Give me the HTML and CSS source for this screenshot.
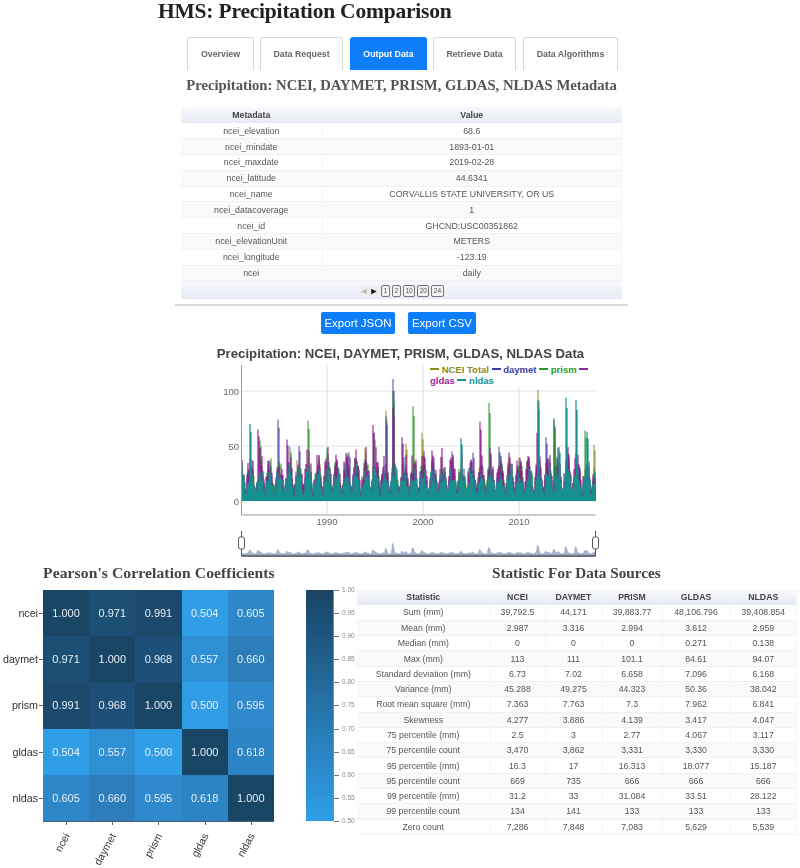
FILE: index.html
```html
<!DOCTYPE html>
<html lang="en">

<head>
    <meta charset="UTF-8">
    <meta name="viewport" content="width=device-width, initial-scale=1.0">
    <title>HMS: Precipitation Comparison</title>
    <link rel="stylesheet" href="styles.css">
</head>

<body>
    <h1 class="page-title">HMS: Precipitation Comparison</h1>

    <div class="main">
        <ul class="tabs">
            <li class="tab tab-1">Overview</li>
            <li class="tab tab-2">Data Request</li>
            <li class="tab tab-3 active">Output Data</li>
            <li class="tab tab-4">Retrieve Data</li>
            <li class="tab tab-5">Data Algorithms</li>
        </ul>

        <h2 class="meta-title">Precipitation: NCEI, DAYMET, PRISM, GLDAS, NLDAS Metadata</h2>

        <table class="grid meta-table">
            <thead>
                <tr><th class="meta-key">Metadata</th><th>Value</th></tr>
            </thead>
            <tbody>
                <tr><td>ncei_elevation</td><td>68.6</td></tr>
                <tr><td>ncei_mindate</td><td>1893-01-01</td></tr>
                <tr><td>ncei_maxdate</td><td>2019-02-28</td></tr>
                <tr><td>ncei_latitude</td><td>44.6341</td></tr>
                <tr><td>ncei_name</td><td>CORVALLIS STATE UNIVERSITY, OR US</td></tr>
                <tr><td>ncei_datacoverage</td><td>1</td></tr>
                <tr><td>ncei_id</td><td>GHCND:USC00351862</td></tr>
                <tr><td>ncei_elevationUnit</td><td>METERS</td></tr>
                <tr><td>ncei_longitude</td><td>-123.19</td></tr>
                <tr><td>ncei</td><td>daily</td></tr>
            </tbody>
            <tfoot>
                <tr>
                    <td colspan="2">
                        <div class="pager">
                            <span class="pg-arrow off">&#9668;</span>
                            <span class="pg-arrow">&#9658;</span>
                            <span class="pg-num">1</span>
                            <span class="pg-num">2</span>
                            <span class="pg-num">10</span>
                            <span class="pg-num">20</span>
                            <span class="pg-num">24</span>
                        </div>
                    </td>
                </tr>
            </tfoot>
        </table>

        <hr class="rule">

        <div class="exports">
            <button class="btn">Export JSON</button>
            <button class="btn">Export CSV</button>
        </div>

        <h3 class="chart-title">Precipitation: NCEI, DAYMET, PRISM, GLDAS, NLDAS Data</h3>
    </div>

    <div class="chart" id="chart">
        <div class="legend">
            <span class="c-ncei"><i></i> NCEI Total</span>
            <span class="c-daymet"><i></i> daymet</span>
            <span class="c-prism"><i></i> prism</span>
            <span class="c-gldas"><i></i> gldas</span>
            <span class="c-nldas"><i></i> nldas</span>
        </div>
    </div>

    <div class="bottom">
        <div class="heat-panel">
            <h2 class="sub-title heat-title">Pearson's Correlation Coefficients</h2>
            <div class="heat">
                <div class="y-label">ncei</div>
                <div class="cell v100">1.000</div><div class="cell v97">0.971</div><div class="cell v99">0.991</div><div class="cell v50">0.504</div><div class="cell v60">0.605</div>
                <div class="y-label">daymet</div>
                <div class="cell v97">0.971</div><div class="cell v100">1.000</div><div class="cell v96">0.968</div><div class="cell v55">0.557</div><div class="cell v66">0.660</div>
                <div class="y-label">prism</div>
                <div class="cell v99">0.991</div><div class="cell v96">0.968</div><div class="cell v100">1.000</div><div class="cell v50">0.500</div><div class="cell v59">0.595</div>
                <div class="y-label">gldas</div>
                <div class="cell v50">0.504</div><div class="cell v55">0.557</div><div class="cell v50">0.500</div><div class="cell v100">1.000</div><div class="cell v62">0.618</div>
                <div class="y-label">nldas</div>
                <div class="cell v60">0.605</div><div class="cell v66">0.660</div><div class="cell v59">0.595</div><div class="cell v62">0.618</div><div class="cell v100">1.000</div>
                <div class="x-spacer"></div>
                <div class="x-label"><span>ncei</span></div>
                <div class="x-label"><span>daymet</span></div>
                <div class="x-label"><span>prism</span></div>
                <div class="x-label"><span>gldas</span></div>
                <div class="x-label"><span>nldas</span></div>
            </div>
        </div>

        <div class="scale">
            <div class="scale-bar"></div>
            <div class="scale-ticks">
                <span>1.00</span><span>0.95</span><span>0.90</span><span>0.85</span><span>0.80</span><span>0.75</span>
                <span>0.70</span><span>0.65</span><span>0.60</span><span>0.55</span><span>0.50</span>
            </div>
        </div>

        <div class="stat-panel">
            <h2 class="sub-title stat-title">Statistic For Data Sources</h2>
            <table class="grid stat-table">
                <thead>
                    <tr><th class="s0">Statistic</th><th class="s1">NCEI</th><th class="s2">DAYMET</th><th class="s3">PRISM</th><th class="s4">GLDAS</th><th>NLDAS</th></tr>
                </thead>
                <tbody>
                    <tr><td>Sum (mm)</td><td>39,792.5</td><td>44,171</td><td>39,883.77</td><td>48,106.796</td><td>39,408.854</td></tr>
                    <tr><td>Mean (mm)</td><td>2.987</td><td>3.316</td><td>2.994</td><td>3.612</td><td>2.959</td></tr>
                    <tr><td>Median (mm)</td><td>0</td><td>0</td><td>0</td><td>0.271</td><td>0.138</td></tr>
                    <tr><td>Max (mm)</td><td>113</td><td>111</td><td>101.1</td><td>84.61</td><td>94.07</td></tr>
                    <tr><td>Standard deviation (mm)</td><td>6.73</td><td>7.02</td><td>6.658</td><td>7.096</td><td>6.168</td></tr>
                    <tr><td>Variance (mm)</td><td>45.288</td><td>49.275</td><td>44.323</td><td>50.36</td><td>38.042</td></tr>
                    <tr><td>Root mean square (mm)</td><td>7.363</td><td>7.763</td><td>7.3</td><td>7.962</td><td>6.841</td></tr>
                    <tr><td>Skewness</td><td>4.277</td><td>3.886</td><td>4.139</td><td>3.417</td><td>4.047</td></tr>
                    <tr><td>75 percentile (mm)</td><td>2.5</td><td>3</td><td>2.77</td><td>4.067</td><td>3.117</td></tr>
                    <tr><td>75 percentile count</td><td>3,470</td><td>3,862</td><td>3,331</td><td>3,330</td><td>3,330</td></tr>
                    <tr><td>95 percentile (mm)</td><td>16.3</td><td>17</td><td>16.313</td><td>18.077</td><td>15.187</td></tr>
                    <tr><td>95 percentile count</td><td>669</td><td>735</td><td>666</td><td>666</td><td>666</td></tr>
                    <tr><td>99 percentile (mm)</td><td>31.2</td><td>33</td><td>31.084</td><td>33.51</td><td>28.122</td></tr>
                    <tr><td>99 percentile count</td><td>134</td><td>141</td><td>133</td><td>133</td><td>133</td></tr>
                    <tr><td>Zero count</td><td>7,286</td><td>7,848</td><td>7,083</td><td>5,629</td><td>5,539</td></tr>
                </tbody>
            </table>
        </div>
    </div>

    <script src="chart.js"></script>
</body>

</html>
```

FILE: styles.css
```css
* {
    box-sizing: border-box;
}

body {
    margin: 0;
    background-color: #fff;
    font-family: "Liberation Sans", Arial, sans-serif;
    color: #444;
    filter: blur(0.35px);
}

.page-title {
    margin: 0;
    padding-left: 158px;
    height: 37px;
    font-family: "Liberation Serif", serif;
    font-size: 21.5px;
    letter-spacing: -0.2px;
    line-height: 23px;
    font-weight: bold;
    color: #222;
}

.main {
    width: 453px;
    margin-left: 175px;
}

.tabs {
    display: flex;
    margin: 0;
    padding: 0;
    list-style: none;
    height: 33px;
}

.tab {
    height: 33px;
    line-height: 32px;
    text-align: center;
    font-size: 8.8px;
    font-weight: bold;
    color: #666;
    background-color: #fff;
    border: 1px solid #d8d8d8;
    border-bottom: 0;
    border-radius: 3px 3px 0 0;
}

.tab-1 { width: 67px; margin-left: 12px; }
.tab-2 { width: 83px; margin-left: 6px; }
.tab-3 { width: 77px; margin-left: 7px; }
.tab-4 { width: 83px; margin-left: 6px; }
.tab-5 { width: 95px; margin-left: 7px; }

.tab.active {
    background-color: #0d7dfa;
    border-color: #0d7dfa;
    color: #fff;
}

.meta-title {
    margin: 0;
    height: 37px;
    line-height: 30px;
    text-align: center;
    font-family: "Liberation Serif", serif;
    font-size: 14.7px;
    font-weight: bold;
    color: #555;
    white-space: nowrap;
}

.grid {
    border-collapse: collapse;
    table-layout: fixed;
    text-align: center;
    color: #555;
}

.grid th {
    font-weight: bold;
    color: #444;
    background: linear-gradient(#f8f9fc, #e6eaf3);
    border-right: 1px solid #f0f2f6;
}

.grid td {
    border-right: 1px solid #f6f6f6;
    border-bottom: 1px solid #f2f2f2;
}

.grid tbody tr:nth-child(even) td {
    background-color: #fafafa;
}

.meta-table {
    width: 441px;
    margin-left: 6px;
    font-size: 8.8px;
}

.meta-key {
    width: 141px;
}

.meta-table th {
    height: 16px;
    padding: 0;
}

.meta-table td {
    height: 15.8px;
    padding: 0;
}

.meta-table tfoot td {
    height: 18px;
    background: linear-gradient(#f8f9fc, #e4e9f3);
    border: 0;
}

.pager {
    display: flex;
    justify-content: center;
    align-items: center;
    gap: 2px;
    padding-top: 1px;
}

.pg-arrow {
    width: 10px;
    height: 10px;
    line-height: 10px;
    font-size: 9px;
    color: #111;
    background-color: #eee;
}

.pg-arrow.off {
    margin-right: -2px;
    color: #bbb;
}

.pg-num {
    min-width: 9px;
    height: 12px;
    padding: 0 1.5px;
    line-height: 10px;
    font-size: 6.5px;
    color: #555;
    background-color: #f2f2f2;
    border: 1px solid #777;
    border-radius: 2px;
}

.rule {
    margin: 5px 0 0;
    border: 0;
    height: 2px;
    background-color: #ddd;
}

.exports {
    display: flex;
    gap: 13px;
    margin: 6px 0 0 146px;
}

.btn {
    height: 22px;
    padding: 0;
    font-family: "Liberation Sans", Arial, sans-serif;
    font-size: 11.5px;
    white-space: nowrap;
    color: #fff;
    background-color: #0d7dfa;
    border: 0;
    border-radius: 2px;
}

.btn:first-child {
    width: 74px;
}

.btn:last-child {
    width: 68px;
}

.chart-title {
    margin: 12px 0 0 -2px;
    height: 15px;
    line-height: 15px;
    text-align: center;
    font-size: 13.2px;
    font-weight: bold;
    color: #444;
    white-space: nowrap;
}

.chart {
    position: relative;
    width: 410px;
    height: 198px;
    margin: 2px 0 0 200px;
}

.chart svg {
    display: block;
}

.legend {
    position: absolute;
    left: 230px;
    top: 1px;
    width: 162px;
    height: 23px;
    background-color: #fff;
    font-size: 9.5px;
    line-height: 11px;
    font-weight: bold;
}

.legend i {
    display: inline-block;
    width: 9px;
    height: 1.5px;
    vertical-align: 3px;
    background-color: currentColor;
}

.c-ncei { color: #8d8a1e; }
.c-daymet { color: #3c3ca6; }
.c-prism { color: #2b9a2b; }
.c-gldas { color: #9a2a9a; }
.c-nldas { color: #198f8f; }

.bottom {
    display: flex;
    align-items: flex-start;
}

.heat-panel {
    width: 306px;
    flex: none;
}

.sub-title {
    margin: 0;
    height: 29px;
    line-height: 24px;
    font-family: "Liberation Serif", serif;
    font-size: 15.2px;
    font-weight: bold;
    color: #444;
    white-space: nowrap;
}

.heat-title {
    padding-left: 43px;
    font-size: 15.6px;
    letter-spacing: 0.1px;
}

.heat {
    display: grid;
    grid-template-columns: 43px repeat(5, 46.2px);
    grid-auto-rows: 46.2px;
}

.cell {
    text-align: center;
    line-height: 46px;
    font-size: 11px;
    color: #e8eef4;
}

.v100 { background-color: #1a4666; }
.v99 { background-color: #1b4a6c; }
.v97 { background-color: #1c4f74; }
.v96 { background-color: #1c5078; }
.v66 { background-color: #2c7db9; }
.v62 { background-color: #2d84c4; }
.v60 { background-color: #2e87c9; }
.v59 { background-color: #2e89cd; }
.v55 { background-color: #2f8fd5; }
.v50 { background-color: #309ee6; }

.y-label {
    position: relative;
    padding-right: 5px;
    text-align: right;
    line-height: 46px;
    font-size: 10.7px;
    color: #333;
}

.y-label::after {
    content: "";
    position: absolute;
    right: 0;
    top: 23px;
    width: 4px;
    height: 1px;
    background-color: #666;
}

.x-label {
    position: relative;
    height: 46px;
    border-top: 1px solid #4a6275;
    font-size: 10.5px;
    color: #333;
}

.x-label::before {
    content: "";
    position: absolute;
    left: 23px;
    top: 0;
    width: 1px;
    height: 3px;
    background-color: #666;
}

.x-label span {
    position: absolute;
    right: 28px;
    top: 9px;
    transform: rotate(-62deg);
    transform-origin: 100% 0;
    white-space: nowrap;
}

.scale {
    display: flex;
    flex: none;
    width: 51px;
    margin-top: 29px;
    height: 232px;
}

.scale-bar {
    width: 28px;
    height: 231px;
    background: linear-gradient(#1a4464, #309fe9);
    border-right: 1px solid #888;
}

.scale-ticks {
    display: flex;
    flex-direction: column;
    justify-content: space-between;
    height: 239px;
    margin-top: -4px;
    font-size: 6.5px;
    line-height: 8px;
    color: #888;
}

.scale-ticks span {
    padding-left: 8px;
    position: relative;
}

.scale-ticks span::before {
    content: "";
    position: absolute;
    left: 0;
    top: 4px;
    width: 5px;
    height: 1px;
    background-color: #777;
}

.stat-panel {
    width: 440px;
    flex: none;
}

.stat-title {
    padding-left: 135px;
}

.stat-table {
    width: 440px;
    font-size: 8.7px;
}

.stat-table th {
    height: 15px;
    padding: 0;
}

.stat-table td {
    height: 15.3px;
    padding: 0;
}

.s0 { width: 133px; }
.s1 { width: 55px; }
.s2 { width: 57px; }
.s3 { width: 60px; }
.s4 { width: 68px; }
```

FILE: chart.js
```js
// precipitation chart, the daily data is faked from a seed + the visible peaks
let seed = 42;
function rnd() {
    seed = (seed * 16807) % 2147483647;
    return seed / 2147483647;
}

let X0 = 41.5, Y0 = 138, W = 354, UNIT = 1.1, YEAR = 9.6;
let series = [
    { color: '#8d8a1e', low: 16, high: 26, op: 0.8 },
    { color: '#3c3ca6', low: 16, high: 26, op: 0.8 },
    { color: '#1f8f1f', low: 16, high: 28, op: 0.8 },
    { color: '#8e1b8e', low: 20, high: 30, op: 0.9 },
    { color: '#16908f', low: 18, high: 16, op: 1 }
];

// [x in px from the left axis, series, value]
let peaks = [
    [8, 4, 70], [16, 3, 65], [18, 2, 55], [36, 1, 74], [45, 3, 56], [48, 2, 49], [57, 1, 50], [66, 2, 73],
    [85, 2, 48], [94, 3, 42], [107, 1, 44], [123, 0, 48], [131, 3, 69], [132, 2, 62], [144, 0, 82], [144, 1, 77],
    [151, 1, 111], [151, 2, 100], [151, 3, 85], [160, 3, 58], [164, 0, 52], [171, 2, 86], [180, 0, 62], [190, 3, 46],
    [210, 1, 45], [219, 4, 57], [231, 1, 44], [238, 3, 72], [247, 2, 89], [248, 3, 48], [257, 1, 49], [267, 3, 44],
    [278, 3, 39], [296, 0, 101], [296, 4, 92], [295, 3, 62], [304, 1, 58], [312, 1, 75], [312, 2, 73], [317, 4, 49],
    [324, 4, 94], [325, 2, 48], [334, 4, 92], [343, 2, 64], [345, 4, 63], [352, 0, 51]
];

let paths = [], maxes = [];
for (let i = 0; i < W; i++) maxes.push(0);

for (let s = 0; s < series.length; s++) {
    let heights = [];
    for (let i = 0; i < W; i++) {
        let t = (i / YEAR + 0.1) * Math.PI;
        let season = 0.2 + 0.8 * Math.abs(Math.cos(t));
        heights.push(season * (series[s].low + rnd() * series[s].high));
    }
    for (let p of peaks) {
        if (p[1] == s) {
            heights[p[0]] = p[2];
            if (p[0] + 1 < W) heights[p[0] + 1] = p[2] * 0.9;
        }
    }
    let d = '';
    for (let i = 0; i < W; i++) {
        d += 'M' + (X0 + i + 0.5) + ' ' + Y0 + 'V' + (Y0 - heights[i] * UNIT).toFixed(1);
        maxes[i] = Math.max(maxes[i], heights[i]);
    }
    paths.push('<path d="' + d + '" stroke="' + series[s].color + '" stroke-opacity="' + series[s].op + '" stroke-width="1.2"/>');
}

let mini = 'M' + X0 + ' 192';
for (let i = 0; i < W; i++) {
    mini += 'L' + (X0 + i) + ' ' + (191 - Math.pow(maxes[i] / 113, 2) * 11).toFixed(1);
}
mini += 'L' + (X0 + W) + ' 192Z';

let grid = '';
for (let v of [0, 50, 100]) {
    let y = Y0 - v * UNIT;
    grid += '<path d="M' + X0 + ' ' + y + 'H' + (X0 + W) + '" stroke="#e4e4e4"/>';
    grid += '<text x="39" y="' + (y + 4) + '" text-anchor="end">' + v + '</text>';
}
for (let yr of [1990, 2000, 2010]) {
    let x = 127 + (yr - 1990) * YEAR;
    grid += '<path d="M' + x + ' 2V152" stroke="#ddd"/>';
    grid += '<text x="' + x + '" y="162" text-anchor="middle">' + yr + '</text>';
}

function handle(x) {
    return '<path d="M' + x + ' 168V193" stroke="#555"/>' +
        '<rect x="' + (x - 3) + '" y="174" width="6" height="12" rx="2" fill="#fff" stroke="#555"/>';
}

document.getElementById('chart').insertAdjacentHTML('afterbegin',
    '<svg width="410" height="198" font-family="Liberation Sans, Arial, sans-serif" font-size="9.5" fill="#666">' +
    grid +
    '<g fill="none">' + paths.join('') + '</g>' +
    '<path d="M' + X0 + ' 2V152H' + (X0 + W) + '" fill="none" stroke="#999"/>' +
    '<path d="' + mini + '" fill="#a9b4cd" stroke="#8391b5" stroke-width="0.5"/>' +
    '<path d="M' + X0 + ' 193H' + (X0 + W) + '" stroke="#6a7280" stroke-width="2"/>' +
    handle(X0) + handle(X0 + W) +
    '</svg>');
```
